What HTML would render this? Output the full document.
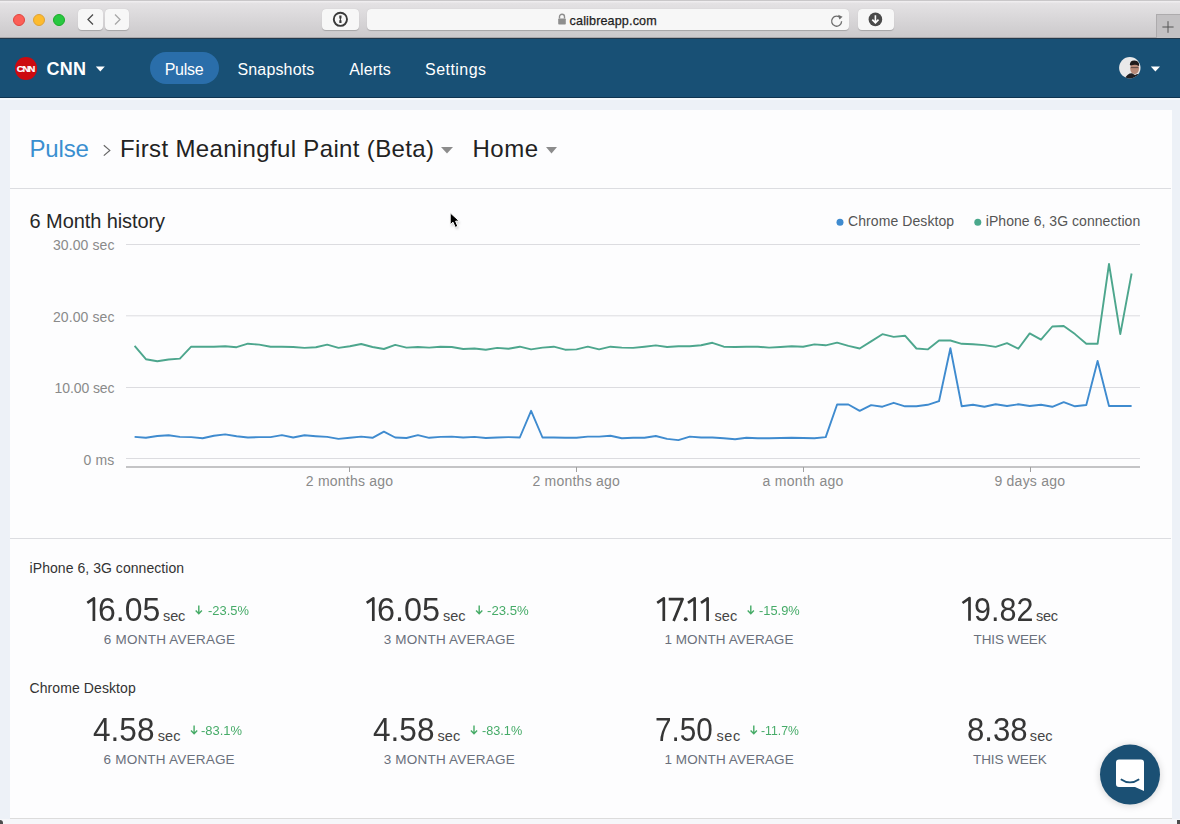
<!DOCTYPE html>
<html><head><meta charset="utf-8">
<style>
*{box-sizing:border-box}
html,body{margin:0;padding:0}
body{width:1180px;height:824px;overflow:hidden;position:relative;background:#edf1f7;font-family:"Liberation Sans",sans-serif}
.t{position:absolute;line-height:1;white-space:nowrap}
.a{position:absolute}
#tb{position:absolute;left:0;top:0;width:1180px;height:38px;background:linear-gradient(#c9c7c9 0,#c9c7c9 1px,#efedef 1px,#efedef 2px,#e4e2e4 3px,#cccacc 36px);border-bottom:1px solid #a9a7a9}
.dot{position:absolute;width:12px;height:12px;border-radius:50%;top:13.5px}
.btn{position:absolute;top:9px;height:21px;background:#f7f7f7;border-radius:4px;box-shadow:0 0.5px 0.8px rgba(0,0,0,.2)}
#nav{position:absolute;left:0;top:38px;width:1180px;height:60px;background:linear-gradient(#22394c 0,#22394c 1px,#185075 1.5px);border-bottom:1px solid #0f3551}
#card{position:absolute;left:10px;top:110px;width:1162px;height:709px;background:#fdfdfe;border-bottom:1px solid #dcdcdc}
.hl{position:absolute;left:10px;width:1161px;height:1px;background:#dcdde1}
</style></head><body>
<div id="tb">
  <div class="dot" style="left:13px;background:#fc5f57;border:0.5px solid #e0443e"></div>
  <div class="dot" style="left:33px;background:#fdbb2e;border:0.5px solid #dea236"></div>
  <div class="dot" style="left:53px;background:#28c840;border:0.5px solid #1aab29"></div>
  <div class="btn" style="left:78px;width:24.5px"></div>
  <div class="btn" style="left:105px;width:24px"></div>
  <svg class="a" style="left:78px;top:9px" width="51" height="21"><polyline points="15,5.5 10,10.5 15,15.5" fill="none" stroke="#4d4d4d" stroke-width="1.3"/><polyline points="37,5.5 42,10.5 37,15.5" fill="none" stroke="#a8a8a8" stroke-width="1.3"/></svg>
  <div class="btn" style="left:322px;width:37px"></div>
  <svg class="a" style="left:322px;top:9px" width="37" height="21"><circle cx="18.4" cy="10.3" r="6.6" fill="none" stroke="#3a3a3a" stroke-width="1.9"/><path d="M17.3,6.6 H19.5 V8.9 L18.8,10.3 L19.5,11.7 V14 H17.3 V11.7 L18,10.3 L17.3,8.9 Z" fill="#3a3a3a"/></svg>
  <div class="btn" style="left:367px;width:481.5px"></div>
  <svg class="a" style="left:557px;top:13px" width="10" height="12"><path d="M2.5,5.5 V3.8 a2.5,2.5 0 0 1 5,0 V5.5" fill="none" stroke="#8e8e8e" stroke-width="1.4"/><rect x="1.2" y="5.5" width="7.6" height="6" rx="0.8" fill="#8e8e8e"/></svg>
  <svg class="a" style="left:829px;top:12px" width="16" height="16"><path d="M11.6,6.2 A5,5 0 1 0 12.6,9.2" fill="none" stroke="#6d6d6d" stroke-width="1.3"/><polygon points="9.2,2.8 13.6,4.8 10.4,7.6" fill="#6d6d6d"/></svg>
  <div class="btn" style="left:857.5px;width:36.5px"></div>
  <svg class="a" style="left:868px;top:12px" width="15" height="15"><circle cx="7.4" cy="7.4" r="6.8" fill="#4a4a4a"/><path d="M7.4,3.2 V10.5 M4.3,7.6 L7.4,10.8 L10.5,7.6" fill="none" stroke="#fff" stroke-width="1.6"/></svg>
  <div class="a" style="left:1156px;top:14px;width:24px;height:24px;background:#c3c1c3;border-left:1px solid #adabad;border-top:1px solid #adabad"></div>
  <svg class="a" style="left:1160px;top:19px" width="16" height="16"><path d="M8,2.2 V13.8 M2.4,8 H13.6" stroke="#555" stroke-width="1"/></svg>
</div>
<div id="nav">
  <div class="a" style="left:14.5px;top:19px;width:22.5px;height:22.5px;border-radius:50%;background:#cc0a0f"></div>
  <div class="t" style="left:16.8px;top:25.6px;font-size:9.8px;font-weight:bold;color:#fff;letter-spacing:-1.3px;-webkit-text-stroke:0.2px #fff">CNN</div>
  <svg class="a" style="left:94px;top:27px" width="12" height="8"><polygon points="1.8,1.6 10.8,1.6 6.3,6.6" fill="#fff"/></svg>
  <div class="a" style="left:150px;top:14px;width:69px;height:32px;border-radius:16px;background:#2a6eaa"></div>
  <svg class="a" style="left:1119px;top:19px" width="22" height="22"><defs><clipPath id="av"><circle cx="10.8" cy="10.8" r="10.7"/></clipPath></defs><g clip-path="url(#av)"><rect width="22" height="22" fill="#e9e9ea"/><ellipse cx="15.6" cy="11.5" rx="4.4" ry="5.6" fill="#b88a78"/><path d="M10.8,8 Q11,3.2 15.8,3.6 Q20.4,4 20.2,8.6 L19.6,9 Q17,6.8 11.6,8.6 Z" fill="#1e1b1c"/><path d="M5.5,22 Q8.5,16 13,16.2 L16,18 Q19,16.4 22,17 V22 Z" fill="#211f22"/><path d="M11.8,10.6 H19.4" stroke="#3a3030" stroke-width="0.7"/></g></svg>
  <svg class="a" style="left:1149px;top:27px" width="12" height="8"><polygon points="1.8,1.4 11,1.4 6.4,6.4" fill="#fff"/></svg>
</div>
<div class="a" style="left:0;top:819px;width:1180px;height:5px;background:#f6f7fa"></div>
<div id="card"></div>
<div class="a" style="left:0;top:98px;width:1180px;height:1.5px;background:#f4f9fc"></div>
<div class="a" style="left:0;top:820px;width:3px;height:4px;background:#222;border-top-right-radius:4px;opacity:.8"></div>
<div class="a" style="left:1177px;top:820px;width:3px;height:4px;background:#222;opacity:.8"></div>
<div class="hl" style="top:188px"></div>
<div class="hl" style="top:538px"></div>
<svg class="a" style="left:0;top:0" width="1180" height="824">
  <polyline points="103.8,145.2 109.8,150.4 103.8,155.6" fill="none" stroke="#666" stroke-width="1.2"/>
  <polygon points="441,147 453,147 447,153.5" fill="#8c8c8c"/>
  <polygon points="546,147 557,147 551.5,153.5" fill="#8c8c8c"/>
  <circle cx="840" cy="222.3" r="3.5" fill="#3f8bcf"/>
  <circle cx="977.8" cy="222.3" r="3.5" fill="#4aa88c"/>
  <g stroke="#dcdce0" stroke-width="1"><line x1="126" y1="244.5" x2="1140" y2="244.5"/><line x1="126" y1="315.8" x2="1140" y2="315.8"/><line x1="126" y1="387.5" x2="1140" y2="387.5"/><line x1="126" y1="458.5" x2="1140" y2="458.5"/></g>
  <line x1="126" y1="467" x2="1140" y2="467" stroke="#c4c4c6" stroke-width="2"/>
  <g stroke="#a0a0a0" stroke-width="1"><line x1="349.5" y1="467" x2="349.5" y2="472"/><line x1="576.5" y1="467" x2="576.5" y2="472"/><line x1="803.5" y1="467" x2="803.5" y2="472"/><line x1="1030.5" y1="467" x2="1030.5" y2="472"/></g>
  <polyline points="134.6,345.8 145.9,359.2 157.3,361.3 168.6,359.5 179.9,358.6 191.2,346.7 202.6,346.7 213.9,346.7 225.2,346.3 236.6,347.2 247.9,343.7 259.2,344.6 270.6,346.7 281.9,346.7 293.2,347.0 304.5,347.9 315.9,347.2 327.2,344.6 338.5,347.9 349.9,346.3 361.2,344.0 372.5,347.0 383.9,349.0 395.2,344.9 406.5,347.6 417.9,347.0 429.2,347.6 440.5,346.7 451.8,347.0 463.2,349.0 474.5,348.5 485.8,349.7 497.2,347.9 508.5,348.8 519.8,346.7 531.1,349.4 542.5,347.6 553.8,346.7 565.1,349.7 576.5,349.4 587.8,346.7 599.1,349.4 610.5,346.7 621.8,347.6 633.1,347.9 644.5,346.7 655.8,345.4 667.1,347.0 678.4,346.2 689.8,346.2 701.1,345.3 712.4,342.8 723.8,346.7 735.1,347.0 746.4,346.7 757.8,346.7 769.1,347.6 780.4,347.0 791.7,346.3 803.1,346.7 814.4,344.4 825.7,345.3 837.1,342.6 848.4,345.8 859.7,348.5 871.1,341.4 882.4,334.2 893.7,336.9 905.0,335.7 916.4,348.5 927.7,349.4 939.0,340.5 950.4,340.5 961.7,343.8 973.0,344.3 984.4,345.1 995.7,346.9 1007.0,343.1 1018.3,348.7 1029.7,333.4 1041.0,339.7 1052.3,326.5 1063.7,326.0 1075.0,334.1 1086.3,343.8 1097.6,343.8 1109.0,264.0 1120.3,334.1 1131.6,273.5" fill="none" stroke="#4da68d" stroke-width="1.9" stroke-linejoin="round"/>
  <polyline points="134.6,436.9 145.9,437.8 157.3,436.0 168.6,435.3 179.9,436.9 191.2,437.1 202.6,438.3 213.9,435.7 225.2,434.4 236.6,436.2 247.9,437.5 259.2,437.1 270.6,437.1 281.9,435.1 293.2,437.5 304.5,435.3 315.9,436.2 327.2,436.9 338.5,438.9 349.9,437.8 361.2,436.6 372.5,437.8 383.9,431.6 395.2,437.5 406.5,438.0 417.9,435.1 429.2,437.8 440.5,436.9 451.8,436.6 463.2,437.5 474.5,436.9 485.8,438.0 497.2,437.5 508.5,437.1 519.8,437.5 531.1,410.8 542.5,437.5 553.8,437.5 565.1,437.8 576.5,437.8 587.8,436.6 599.1,436.6 610.5,435.7 621.8,438.3 633.1,437.8 644.5,437.8 655.8,436.0 667.1,438.9 678.4,440.1 689.8,436.6 701.1,437.5 712.4,437.5 723.8,438.3 735.1,439.2 746.4,437.8 757.8,438.3 769.1,438.3 780.4,438.0 791.7,437.8 803.1,438.0 814.4,438.3 825.7,437.1 837.1,404.5 848.4,404.5 859.7,410.8 871.1,405.1 882.4,406.7 893.7,402.8 905.0,406.3 916.4,406.3 927.7,404.8 939.0,401.2 950.4,348.2 961.7,406.3 973.0,404.8 984.4,406.8 995.7,404.3 1007.0,406.0 1018.3,404.3 1029.7,406.0 1041.0,404.8 1052.3,406.8 1063.7,402.2 1075.0,406.3 1086.3,405.0 1097.6,360.9 1109.0,406.0 1120.3,406.0 1131.6,406.0" fill="none" stroke="#3f8bcf" stroke-width="1.9" stroke-linejoin="round"/>
  <g stroke="#45ab66" stroke-width="1.4" fill="none"><path d="M198.8,605.5 V613.4 M195.7,610.6 L198.8,613.7 L201.9,610.6" />
<path d="M479.2,605.5 V613.4 M476.1,610.6 L479.2,613.7 L482.3,610.6" />
<path d="M750.8,605.5 V613.4 M747.7,610.6 L750.8,613.7 L753.9,610.6" />
<path d="M194.1,725.5 V733.4 M191.0,730.6 L194.1,733.7 L197.2,730.6" />
<path d="M474.0,725.5 V733.4 M470.9,730.6 L474.0,733.7 L477.1,730.6" />
<path d="M753.8,725.5 V733.4 M750.6,730.6 L753.8,733.7 L756.9,730.6" /></g>
  <g stroke="#333" stroke-width="2.7" fill="none" stroke-linejoin="round"><path d="M663.8,621 V598.3 L657.2,602.8"/><path d="M93.9,621 V598.3 L87.3,602.8"/><path d="M373.3,621 V598.3 L366.7,602.8"/><path d="M969.5,620.8 V598.2 L962.5,603"/><path d="M668.7,599.1 H682.6 L673.6,621"/><path d="M694.6,621 V598.3 L688,602.8"/><path d="M707.6,621 V598.3 L701,602.8"/></g>
  <circle cx="685.7" cy="619.2" r="2" fill="#333"/>
  <defs><filter id="sh2" x="-50%" y="-50%" width="200%" height="200%"><feGaussianBlur stdDeviation="1"/></filter><filter id="sh" x="-50%" y="-50%" width="200%" height="200%"><feGaussianBlur stdDeviation="3"/></filter></defs>
  <circle cx="1130" cy="775.6" r="31" fill="rgba(0,0,0,0.13)" filter="url(#sh)"/>
  <circle cx="1130" cy="774.6" r="30" fill="#1b5074"/>
  <path d="M1119,759.5 H1141 a3,3 0 0 1 3,3 V791 L1135,787 H1119 a3,3 0 0 1 -3,-3 V762.5 a3,3 0 0 1 3,-3 Z" fill="#fff"/>
  <path d="M1120.8,779.2 Q1130,785.6 1139.2,779.2" fill="none" stroke="#1b5074" stroke-width="1.9"/>
  <polygon points="451,215 451,227 454,224.4 456.4,229.4 458.9,228.3 456.6,223.5 460.6,223.3" fill="rgba(0,0,0,.18)" filter="url(#sh2)"/><polygon points="450.2,212.8 450.2,224.8 453,222.2 455.2,227.4 457.8,226.3 455.6,221.2 459.2,221" fill="#000" stroke="#fff" stroke-width="1" stroke-linejoin="round"/>
</svg>
<div class="t" style="left:569.6px;top:14.6px;font-size:12.6px;color:#1e1e1e;letter-spacing:0.13px;-webkit-text-stroke:0.25px #1e1e1e">calibreapp.com</div>
<div class="t" style="left:46.5px;top:60.0px;font-size:18px;color:#fff;letter-spacing:0.25px;font-weight:700">CNN</div>
<div class="t" style="left:164.7px;top:62.0px;font-size:16px;color:#fff;letter-spacing:-0.27px">Pulse</div>
<div class="t" style="left:237.5px;top:62.0px;font-size:16px;color:#fff;letter-spacing:0.15px">Snapshots</div>
<div class="t" style="left:349.3px;top:62.0px;font-size:16px;color:#fff;letter-spacing:0.12px">Alerts</div>
<div class="t" style="left:425.0px;top:62.0px;font-size:16px;color:#fff;letter-spacing:0.47px">Settings</div>
<div class="t" style="left:29.5px;top:137.2px;font-size:24px;color:#3a8fd0;letter-spacing:-0.18px">Pulse</div>
<div class="t" style="left:120.0px;top:137.0px;font-size:24px;color:#222;letter-spacing:0.35px">First Meaningful Paint (Beta)</div>
<div class="t" style="left:472.5px;top:137.0px;font-size:24px;color:#222;letter-spacing:0.50px">Home</div>
<div class="t" style="left:29.6px;top:211.2px;font-size:20px;color:#272727;letter-spacing:-0.09px">6 Month history</div>
<div class="t" style="left:848.0px;top:214.0px;font-size:14px;color:#555;letter-spacing:0.08px">Chrome Desktop</div>
<div class="t" style="left:985.8px;top:214.0px;font-size:14px;color:#555;letter-spacing:0.05px">iPhone 6, 3G connection</div>
<div class="t" style="left:52.9px;top:237.5px;font-size:14px;color:#8a8a8a;letter-spacing:0.11px">30.00 sec</div>
<div class="t" style="left:52.9px;top:309.5px;font-size:14px;color:#8a8a8a;letter-spacing:0.11px">20.00 sec</div>
<div class="t" style="left:54.5px;top:381.0px;font-size:14px;color:#8a8a8a;letter-spacing:-0.09px">10.00 sec</div>
<div class="t" style="left:83.5px;top:452.5px;font-size:14px;color:#8a8a8a;letter-spacing:0.17px">0 ms</div>
<div class="t" style="left:305.8px;top:474.0px;font-size:14px;color:#8a8a8a;letter-spacing:0.22px">2 months ago</div>
<div class="t" style="left:532.5px;top:474.0px;font-size:14px;color:#8a8a8a;letter-spacing:0.22px">2 months ago</div>
<div class="t" style="left:762.5px;top:474.0px;font-size:14px;color:#8a8a8a;letter-spacing:0.30px">a month ago</div>
<div class="t" style="left:994.5px;top:474.0px;font-size:14px;color:#8a8a8a;letter-spacing:0.22px">9 days ago</div>
<div class="t" style="left:29.6px;top:560.9px;font-size:14px;color:#333;letter-spacing:0.05px">iPhone 6, 3G connection</div>
<div class="t" style="left:29.5px;top:680.9px;font-size:14px;color:#333;letter-spacing:0.09px">Chrome Desktop</div>
<div class="t" style="left:97.9px;top:592.7px;font-size:33px;color:#363636;transform:scaleX(0.9689);transform-origin:0 0">6.05</div>
<div class="t" style="left:163.0px;top:608.7px;font-size:14.5px;color:#454545;letter-spacing:-0.10px">sec</div>
<div class="t" style="left:207.6px;top:604.0px;font-size:13.5px;color:#46ab68;transform:scaleX(0.9561);transform-origin:0 0">-23.5%</div>
<div class="t" style="left:103.7px;top:632.5px;font-size:13.5px;color:#6a707c;letter-spacing:0.24px">6 MONTH AVERAGE</div>
<div class="t" style="left:377.2px;top:592.7px;font-size:33px;color:#363636;transform:scaleX(0.9803);transform-origin:0 0">6.05</div>
<div class="t" style="left:443.0px;top:608.7px;font-size:14.5px;color:#454545;letter-spacing:-0.05px">sec</div>
<div class="t" style="left:487.0px;top:604.0px;font-size:13.5px;color:#46ab68;transform:scaleX(0.9756);transform-origin:0 0">-23.5%</div>
<div class="t" style="left:383.7px;top:632.5px;font-size:13.5px;color:#6a707c;letter-spacing:0.21px">3 MONTH AVERAGE</div>
<div class="t" style="left:714.4px;top:608.7px;font-size:14.5px;color:#454545;letter-spacing:0.10px">sec</div>
<div class="t" style="left:758.5px;top:604.0px;font-size:13.5px;color:#46ab68;transform:scaleX(0.9512);transform-origin:0 0">-15.9%</div>
<div class="t" style="left:664.4px;top:632.5px;font-size:13.5px;color:#6a707c;letter-spacing:0.07px">1 MONTH AVERAGE</div>
<div class="t" style="left:973.7px;top:592.7px;font-size:33px;color:#363636;transform:scaleX(0.9246);transform-origin:0 0">9.82</div>
<div class="t" style="left:1036.0px;top:608.7px;font-size:14.5px;color:#454545;letter-spacing:-0.25px">sec</div>
<div class="t" style="left:973.6px;top:632.5px;font-size:13.5px;color:#6a707c;letter-spacing:-0.15px">THIS WEEK</div>
<div class="t" style="left:92.9px;top:712.7px;font-size:33px;color:#363636;transform:scaleX(0.9565);transform-origin:0 0">4.58</div>
<div class="t" style="left:157.7px;top:728.7px;font-size:14.5px;color:#454545;letter-spacing:0.10px">sec</div>
<div class="t" style="left:201.0px;top:724.0px;font-size:13.5px;color:#46ab68;transform:scaleX(0.9610);transform-origin:0 0">-83.1%</div>
<div class="t" style="left:103.5px;top:752.5px;font-size:13.5px;color:#6a707c;letter-spacing:0.22px">6 MONTH AVERAGE</div>
<div class="t" style="left:372.6px;top:712.7px;font-size:33px;color:#363636;transform:scaleX(0.9565);transform-origin:0 0">4.58</div>
<div class="t" style="left:437.4px;top:728.7px;font-size:14.5px;color:#454545;letter-spacing:0.10px">sec</div>
<div class="t" style="left:481.6px;top:724.0px;font-size:13.5px;color:#46ab68;transform:scaleX(0.9390);transform-origin:0 0">-83.1%</div>
<div class="t" style="left:383.7px;top:752.5px;font-size:13.5px;color:#6a707c;letter-spacing:0.21px">3 MONTH AVERAGE</div>
<div class="t" style="left:655.0px;top:712.7px;font-size:33px;color:#363636;transform:scaleX(0.8984);transform-origin:0 0">7.50</div>
<div class="t" style="left:716.6px;top:728.7px;font-size:14.5px;color:#454545;letter-spacing:0.50px">sec</div>
<div class="t" style="left:761.4px;top:724.0px;font-size:13.5px;color:#46ab68;transform:scaleX(0.9050);transform-origin:0 0">-11.7%</div>
<div class="t" style="left:664.4px;top:752.5px;font-size:13.5px;color:#6a707c;letter-spacing:0.09px">1 MONTH AVERAGE</div>
<div class="t" style="left:966.5px;top:712.7px;font-size:33px;color:#363636;transform:scaleX(0.9435);transform-origin:0 0">8.38</div>
<div class="t" style="left:1029.8px;top:728.7px;font-size:14.5px;color:#454545;letter-spacing:0.10px">sec</div>
<div class="t" style="left:973.0px;top:752.5px;font-size:13.5px;color:#6a707c;letter-spacing:-0.07px">THIS WEEK</div>
</body></html>
